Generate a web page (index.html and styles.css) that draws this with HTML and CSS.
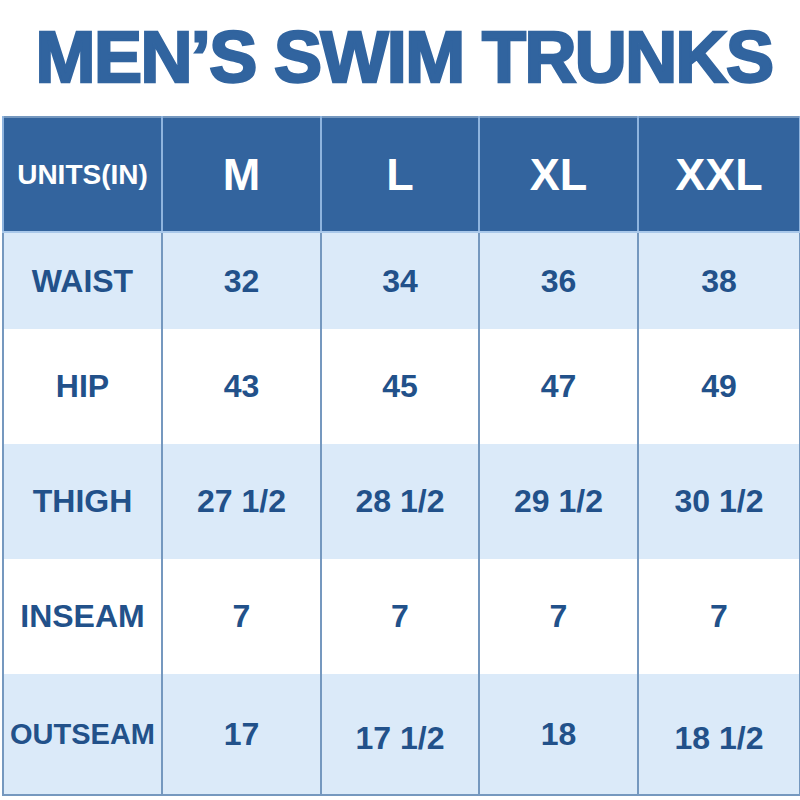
FILE: index.html
```html
<!DOCTYPE html>
<html>
<head>
<meta charset="utf-8">
<link rel="stylesheet" href="styles.css">
</head>
<body>
<div class="page">
  <h1 class="title">MEN’S SWIM TRUNKS</h1>
  <table class="chart">
    <colgroup>
      <col class="c1"><col class="c2"><col class="c3"><col class="c4"><col class="c5">
    </colgroup>
    <thead>
      <tr class="head">
        <th class="units">UNITS(IN)</th>
        <th>M</th>
        <th>L</th>
        <th>XL</th>
        <th>XXL</th>
      </tr>
    </thead>
    <tbody>
      <tr class="r-waist shade">
        <td class="label">WAIST</td><td>32</td><td>34</td><td>36</td><td>38</td>
      </tr>
      <tr class="r-hip">
        <td class="label">HIP</td><td>43</td><td>45</td><td>47</td><td>49</td>
      </tr>
      <tr class="r-thigh shade">
        <td class="label">THIGH</td><td>27 1/2</td><td>28 1/2</td><td>29 1/2</td><td>30 1/2</td>
      </tr>
      <tr class="r-inseam">
        <td class="label">INSEAM</td><td>7</td><td>7</td><td>7</td><td>7</td>
      </tr>
      <tr class="r-outseam shade">
        <td class="label tight">OUTSEAM</td><td>17</td><td class="low">17 1/2</td><td>18</td><td class="low">18 1/2</td>
      </tr>
    </tbody>
  </table>
</div>
</body>
</html>
```

FILE: styles.css
```css
html, body {
  margin: 0;
  padding: 0;
  background: #ffffff;
}

.page {
  width: 800px;
  height: 800px;
  overflow: hidden;
}

.title {
  margin: 0;
  height: 116px;
  line-height: 114px;
  text-align: center;
  padding-left: 8px;
  font-family: "Liberation Sans", Arial, sans-serif;
  font-weight: 700;
  font-size: 72px;
  letter-spacing: -1.6px;
  color: #31649f;
  -webkit-text-stroke: 2.5px #31649f;
  white-space: nowrap;
}

.chart {
  margin-left: 2px;
  width: 797px;
  table-layout: fixed;
  border-collapse: collapse;
  border: 2px solid #7598bf;
  font-family: "Liberation Sans", Arial, sans-serif;
  font-weight: 700;
}

.c1 { width: 159px; }
.c2 { width: 159px; }
.c3 { width: 158px; }
.c4 { width: 159px; }
.c5 { width: 162px; }

.chart th,
.chart td {
  padding: 0;
  text-align: center;
  vertical-align: middle;
  border-left: 2px solid #7598bf;
  border-right: 2px solid #7598bf;
}

.head {
  height: 115px;
  background: #33649e;
}

.head th {
  color: #ffffff;
  font-size: 45px;
  font-weight: 700;
  border-color: #8fb4de;
  border-bottom: 2px solid #a9c8ea;
}

.head th.units {
  font-size: 28px;
}

.chart td {
  color: #22518a;
  font-size: 32px;
}

.chart td.low {
  padding-top: 8px;
}

.shade { background: #dbeaf9; }

.r-waist { height: 97px; }
.r-hip { height: 115px; }
.r-thigh { height: 115px; }
.r-inseam { height: 115px; }
.r-outseam { height: 121px; }

.chart td.tight {
  font-size: 29px;
}
```
